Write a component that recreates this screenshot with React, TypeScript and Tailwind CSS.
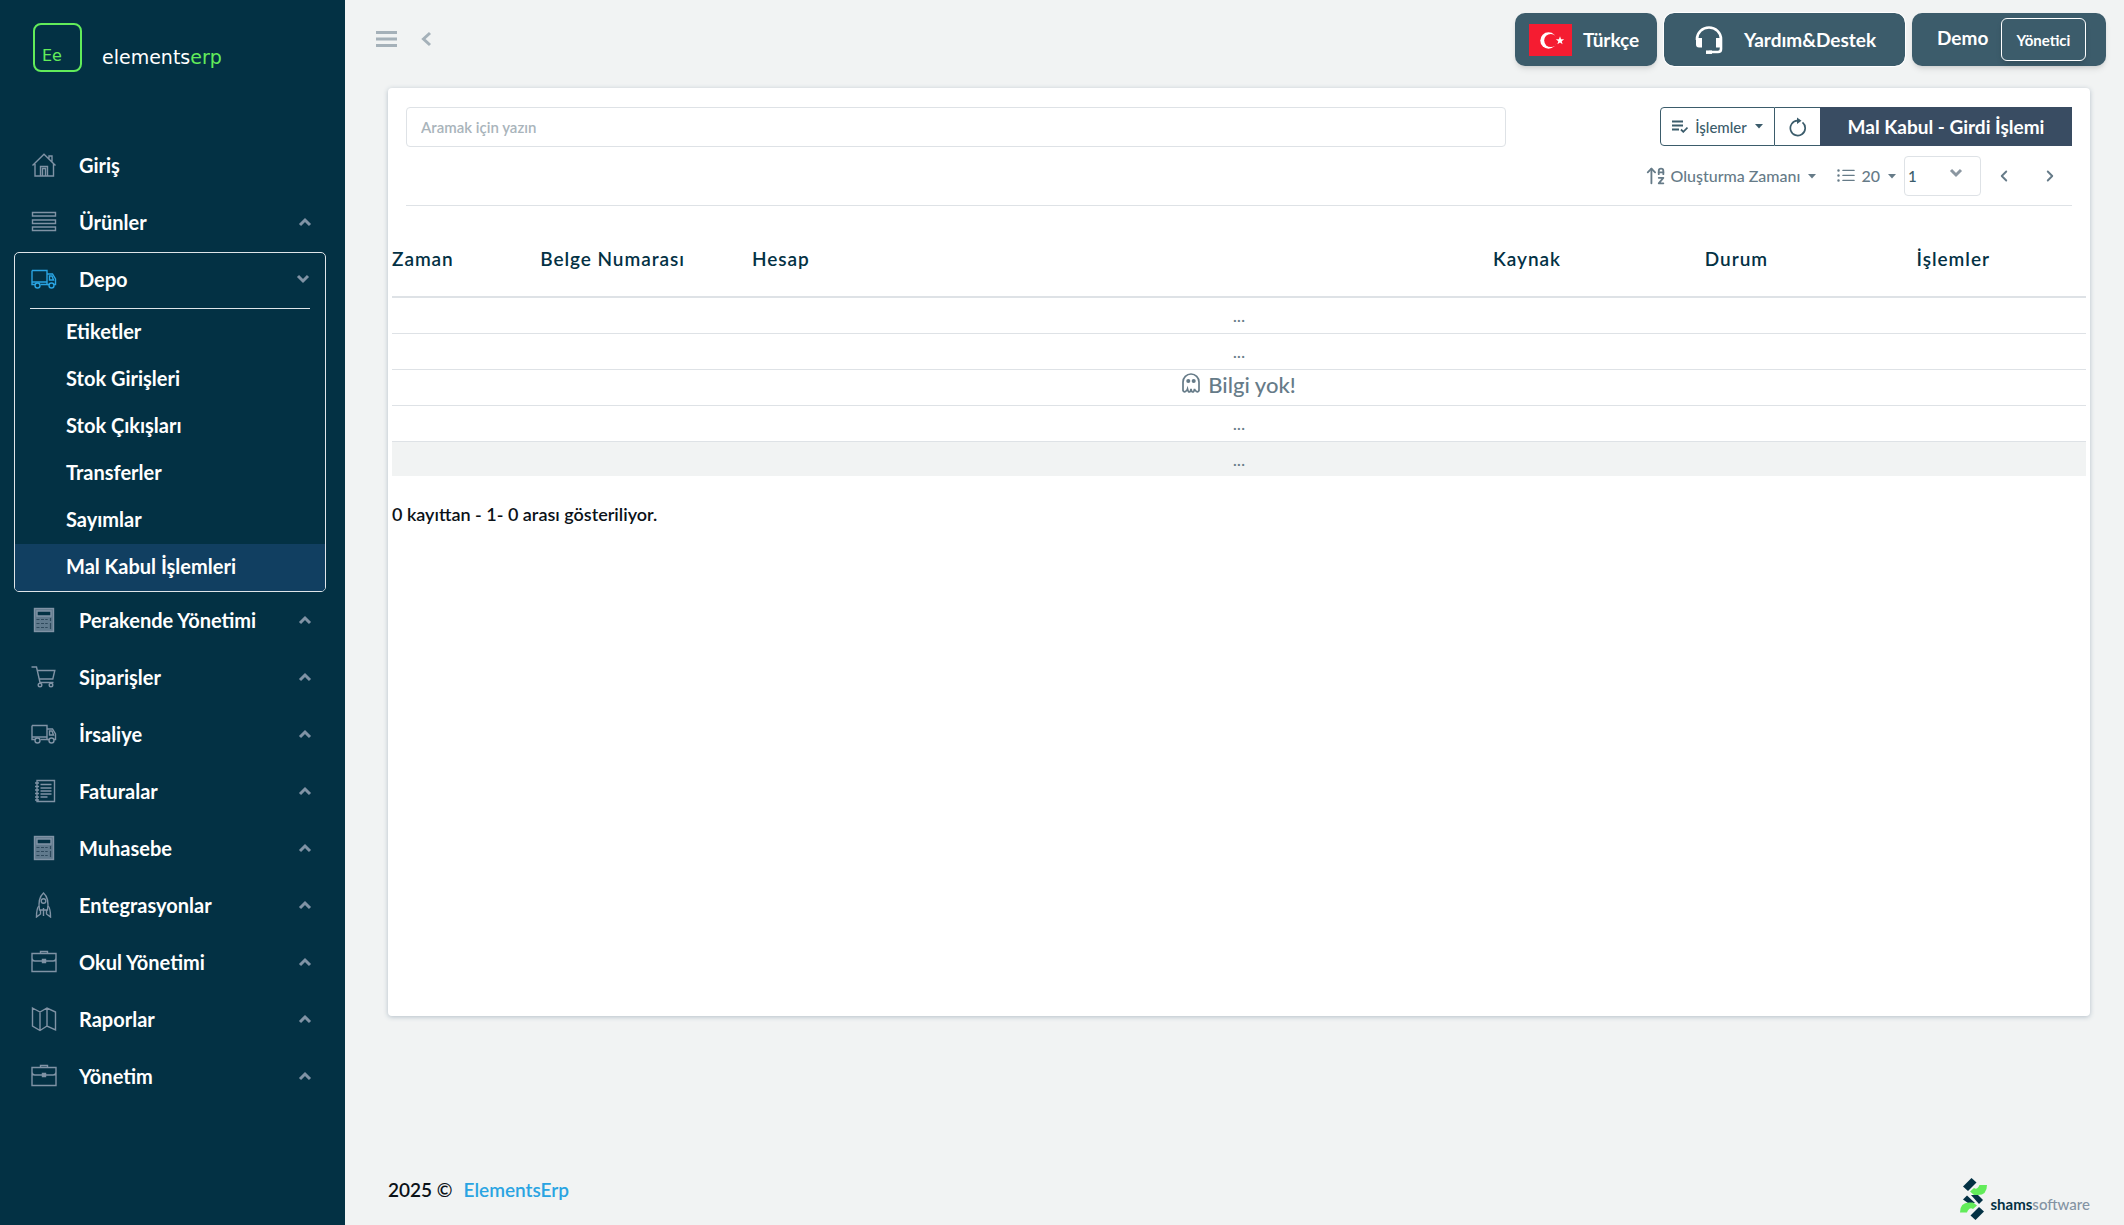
import type { ReactNode } from "react";
import { BsListUl, BsChevronLeft, BsChevronRight } from "react-icons/bs";
import { ArrowUpAZ } from "lucide-react";

function Stroke({ children, className = "" }: { children: ReactNode; className?: string }) {
  return (
    <svg
      viewBox="0 0 26 26"
      fill="none"
      stroke="currentColor"
      strokeWidth="1.4"
      aria-hidden="true"
      className={`size-[26px] shrink-0 ${className}`}
    >
      {children}
    </svg>
  );
}

const HomeIcon = () => (
  <Stroke>
    <path d="M1.5 13.5 13 2.2l11.500 11.300M4 12v12h18.500V12M18 6.500V4h3v5.500" />
    <path d="M9.500 24V14.500h7V24M11.500 24v-7.500h3V24" />
  </Stroke>
);
const ListIcon = () => (
  <Stroke>
    <path d="M1.500 3.500h23v3.500h-23zM1.500 11h23v3.500h-23zM1.500 18h23v3.500h-23z" />
  </Stroke>
);
const TruckIcon = () => (
  <Stroke>
    <path d="M1 4.500h15v14H9.500M4 18.500H1v-14" />
    <path d="M16 8h5.500l3 5v5.500h-1.500M18 18.500h-2" />
    <path d="M18.500 10h2.500l1.500 4h-4zM1 16h15" />
    <circle cx="6.500" cy="19.500" r="2.500" />
    <circle cx="20.500" cy="19.500" r="2.500" />
  </Stroke>
);
const CalculatorIcon = () => (
  <Stroke>
    <rect x="3.500" y="1.500" width="19" height="23" fill="currentColor" fillOpacity="0.75" />
    <path d="M6 4h14v5H6z" className="fill-[#033144]" />
    <path
      d="M5.500 12.500h3M10 12.500h3M14.200 12.500h2.500M5.500 16.500h3M10 16.500h3M14.200 16.500h2.500M5.500 20.500h3M10 20.500h3M14.200 20.500h2.500M19.500 11v3M19.500 16v6"
      className="stroke-[#2f4a5d]"
      strokeWidth="1.2"
    />
  </Stroke>
);
const CartIcon = () => (
  <Stroke>
    <path d="M.5 3h5l3.500 15.500h13.500M6.500 6.500h17.300l-2 8.500H8.200" />
    <circle cx="9" cy="21" r="1.800" />
    <circle cx="20" cy="21" r="1.800" />
  </Stroke>
);
const InvoiceIcon = () => (
  <Stroke>
    <path d="M6 2.500h17.500v21H6zM9.500 6.500h11M9.500 10h11M9.500 13h11M9.500 16h11M9.500 19h7" />
    <path d="M4 5h4M4 8.500h4M4 12h4M4 15.500h4M4 19h4M4 22h4" />
  </Stroke>
);
const RocketIcon = () => (
  <Stroke>
    <path d="M12.500 1c-4 3.500-5.500 8-4 17h8c1.500-9 0-13.500-4-17z" />
    <circle cx="12.500" cy="9" r="2.300" />
    <path d="M8 14c-2 1.500-2.500 3.500-2.500 11l4-3V18M17 14c2 1.500 2.500 3.500 2.500 11l-4-3V18M12.500 16v8" />
  </Stroke>
);
const BriefcaseIcon = () => (
  <Stroke>
    <path d="M1 4.500h24v18H1zM9.500 4.500V2.500h7v2M1 8.500q0 3.500 3 3.500h7M25 8.500q0 3.500-3 3.500h-7" />
    <path d="M11.500 10.500h3v3h-3z" fill="currentColor" />
  </Stroke>
);
const MapIcon = () => (
  <Stroke>
    <path d="M1.500 2 9 6l7-4 8.500 4v18L16 20l-7 4.500L1.500 20zM9 6v18.500M16 2v18" />
  </Stroke>
);

function Chevron({ dir = "up", className = "" }: { dir?: "up" | "down"; className?: string }) {
  return (
    <svg viewBox="0 0 14 10" className={`w-[14px] h-[10px] ${className}`} fill="none" stroke="currentColor" strokeWidth="3" aria-hidden="true">
      <path d={dir === "up" ? "M2 8l5-5 5 5" : "M2 2l5 5 5-5"} />
    </svg>
  );
}

function Caret() {
  return (
    <svg viewBox="0 0 8 5" className="w-2 h-[5px]" fill="currentColor" aria-hidden="true">
      <path d="M0 0h8L4 4.500z" />
    </svg>
  );
}

function NavRow({ icon, label, open, leaf }: { icon: ReactNode; label: string; open?: boolean; leaf?: boolean }) {
  return (
    <a href="#" className={`flex items-center pb-1 pl-[31px] pr-[33px] text-white ${open ? "h-[55px]" : "h-[57px]"}`}>
      <span className={open ? "text-[#2aa4e2]" : "text-[#8093a5]"}>{icon}</span>
      <span className="ml-[22px] grow text-[20px] leading-6 font-bold">{label}</span>
      {!leaf && <Chevron dir={open ? "down" : "up"} className="text-[#8093a5]" />}
    </a>
  );
}

const subItems = ["Etiketler", "Stok Girişleri", "Stok Çıkışları", "Transferler", "Sayımlar", "Mal Kabul İşlemleri"];

const lowerItems = [
  { label: "Perakende Yönetimi", icon: <CalculatorIcon /> },
  { label: "Siparişler", icon: <CartIcon /> },
  { label: "İrsaliye", icon: <TruckIcon /> },
  { label: "Faturalar", icon: <InvoiceIcon /> },
  { label: "Muhasebe", icon: <CalculatorIcon /> },
  { label: "Entegrasyonlar", icon: <RocketIcon /> },
  { label: "Okul Yönetimi", icon: <BriefcaseIcon /> },
  { label: "Raporlar", icon: <MapIcon /> },
  { label: "Yönetim", icon: <BriefcaseIcon /> },
];

function Sidebar() {
  return (
    <aside className="w-[345px] shrink-0 bg-[#033144]">
      <a href="#" className="flex h-[138px] items-start pl-[33px] pt-[23px] font-['DejaVu_Sans']">
        <span className="flex size-[49px] items-end rounded-lg border-2 border-[#62ec5a] pb-1 pl-[7px] text-[16px] leading-5 text-[#62ec5a]">
          Ee
        </span>
        <span className="ml-5 mt-[22px] text-[19px] leading-6 text-white">
          elements<span className="text-[#62ec5a]">erp</span>
        </span>
      </a>
      <nav>
        <NavRow icon={<HomeIcon />} label="Giriş" leaf />
        <NavRow icon={<ListIcon />} label="Ürünler" />
        <div className="mb-px ml-[14px] mr-[19px] overflow-hidden rounded-[5px] border border-[#dfe5e9]">
          <div className="mx-[15px] border-b border-[#dfe5e9]">
            <div className="-ml-[30px] -mr-[33px]">
              <NavRow icon={<TruckIcon />} label="Depo" open />
            </div>
          </div>
          <ul>
            {subItems.map((s) => (
              <li key={s}>
                <a
                  href="#"
                  className={`flex h-[47px] items-center pb-1 pl-[51px] text-[20px] leading-6 font-bold text-white ${
                    s === "Mal Kabul İşlemleri" ? "bg-[#113f61]" : ""
                  }`}
                >
                  {s}
                </a>
              </li>
            ))}
          </ul>
        </div>
        {lowerItems.map((i) => (
          <NavRow key={i.label} icon={i.icon} label={i.label} />
        ))}
      </nav>
    </aside>
  );
}

function TopBar() {
  return (
    <header className="flex h-[88px] items-start justify-between pl-[31px] pr-[18px] pt-[13px]">
      <div className="flex h-[52px] items-center gap-[23px] text-[#a5b1b9]">
        <button type="button" aria-label="Menü">
          <svg viewBox="0 0 21 16" className="h-4 w-[21px]" fill="currentColor">
            <path d="M0 0h21v3H0zM0 6.500h21v3H0zM0 13h21v3H0z" />
          </svg>
        </button>
        <button type="button" aria-label="Geri">
          <svg viewBox="0 0 12 16" className="h-4 w-3" fill="none" stroke="currentColor" strokeWidth="3">
            <path d="M10 2 3.500 8l6.500 6" />
          </svg>
        </button>
      </div>
      <div className="flex gap-[7px] text-[19px] leading-6 font-bold text-white">
        <button type="button" className="flex h-[53px] w-[142px] items-center rounded-[10px] bg-[#3c5c6b] pl-[14px] shadow-md">
          <svg viewBox="0 0 43 32" className="h-8 w-[43px]" aria-hidden="true">
            <rect width="43" height="32" fill="#f51c31" />
            <circle cx="19.500" cy="16.500" r="8.200" fill="#fff" />
            <circle cx="21.800" cy="16.500" r="6.600" fill="#f51c31" />
            <path d="M31 12.200l1.100 3 3.100.100-2.500 1.900.9 3-2.600-1.800-2.600 1.800.9-3-2.500-1.900 3.100-.1z" fill="#fff" />
          </svg>
          <span className="ml-[11px]">Türkçe</span>
        </button>
        <button
          type="button"
          className="flex h-[53px] w-[241px] items-center rounded-[10px] bg-[#3c5c6b] pl-[31px] outline outline-white"
        >
          <svg viewBox="0 0 28 28" className="size-7" fill="none" stroke="currentColor" strokeWidth="2.600" aria-hidden="true">
            <path d="M2 14v-1a12 11.500 0 0 1 24 0v10q0 3-3 3h-9" />
            <path d="M1 12h6v9.500H4Q1 21.500 1 18.500zM21 12h6v6.500q0 3-3 3h-3z" fill="currentColor" stroke="none" />
            <path d="M11 26.200h6" strokeWidth="3.500" />
          </svg>
          <span className="ml-[21px]">Yardım&amp;Destek</span>
        </button>
        <div className="flex h-[53px] w-[194px] items-start justify-between rounded-[10px] bg-[#3c5c6b] pl-[25px] pr-5 pt-[5px] shadow-md">
          <span className="mt-2">Demo</span>
          <button type="button" className="h-[43px] w-[85px] rounded-md border border-white text-[15px] leading-5 shadow-md">
            Yönetici
          </button>
        </div>
      </div>
    </header>
  );
}

function Toolbar() {
  return (
    <div className="mx-[18px] flex h-[118px] items-start justify-between border-b border-[#dee2e6] pt-[19px]">
      <input
        type="text"
        aria-label="Arama"
        placeholder="Aramak için yazın"
        className="h-10 w-[66%] rounded border border-[#dee2e6] px-[14px] text-[15px] font-semibold outline-none placeholder:text-[#a9b4bb]"
      />
      <div className="flex flex-col items-end text-[#667b88]">
        <div className="flex h-[39px]">
          <button
            type="button"
            className="flex w-[115px] items-center justify-center rounded-l border border-[#3b5c6b] text-[15px] leading-5 font-medium text-[#3b5c6b]"
          >
            <svg viewBox="0 0 16 13" className="mr-[7px] h-[13px] w-4" fill="none" stroke="currentColor" strokeWidth="1.800" aria-hidden="true">
              <path d="M0 1.500h11M0 5.500h11M0 9.500h7M9 9.500l2.300 2.300L15.500 7.600" />
            </svg>
            İşlemler
            <span className="ml-2">
              <Caret />
            </span>
          </button>
          <button
            type="button"
            aria-label="Yenile"
            className="flex w-[45px] items-center justify-center border-y border-[#3b5c6b] text-[#3b5c6b]"
          >
            <svg viewBox="0 0 18 20" className="h-5 w-[18px]" fill="none" stroke="currentColor" strokeWidth="1.700" aria-hidden="true">
              <path d="M13.500 5.400a7.400 7.400 0 1 1-5-1.700h2" />
              <path d="M8 .5 12.500 3.700 8 7z" fill="currentColor" stroke="none" />
            </svg>
          </button>
          <button type="button" className="w-[252px] bg-[#394c62] text-[19px] leading-6 font-bold text-white">
            Mal Kabul - Girdi İşlemi
          </button>
        </div>
        <div className="mt-[10px] flex h-10 items-center pr-4 text-base leading-5 font-medium">
          <button type="button" className="flex items-center">
            <ArrowUpAZ className="mr-1 size-[22px]" strokeWidth={2} />
            Oluşturma Zamanı
            <span className="ml-2">
              <Caret />
            </span>
          </button>
          <button type="button" className="ml-5 flex items-center">
            <BsListUl className="mr-[5px] size-5" />
            20
            <span className="ml-2">
              <Caret />
            </span>
          </button>
          <div className="relative ml-2">
            <select
              aria-label="Sayfa"
              defaultValue="1"
              className="block h-10 w-[77px] appearance-none rounded border border-[#dee2e6] bg-white pl-[3px] text-[15px] text-[#3b5c6b]"
            >
              <option>1</option>
            </select>
            <Chevron dir="down" className="pointer-events-none absolute right-[18px] top-3 text-[#8b97a1]" />
          </div>
          <button type="button" aria-label="Önceki" className="ml-[17px]">
            <BsChevronLeft className="size-3" strokeWidth="1.500" />
          </button>
          <button type="button" aria-label="Sonraki" className="ml-[34px]">
            <BsChevronRight className="size-3" strokeWidth="1.500" />
          </button>
        </div>
      </div>
    </div>
  );
}

const columns = [
  { label: "Zaman", width: "w-[8.75%]" },
  { label: "Belge Numarası", width: "w-[12.5%]" },
  { label: "Hesap", width: "w-[43.75%]" },
  { label: "Kaynak", width: "w-[12.5%]" },
  { label: "Durum", width: "w-[12.5%]" },
  { label: "İşlemler", width: "w-[10%]" },
];

function EmptyNotice() {
  return (
    <span className="flex items-center justify-center gap-2 pb-1 text-[22px] leading-7 font-medium">
      <svg viewBox="0 0 18 20" className="-mt-1 h-5 w-[18px]" fill="none" stroke="currentColor" strokeWidth="1.700" aria-hidden="true">
        <path d="M1 17.500V9a8 8 0 0 1 16 0v8.500q-1 2-2.500 1t-2-2.500q-.5 3-1.700 3T9 16q-.500 3-1.700 3t-1.800-3q-.5 1.500-2 2.500T1 17.500z" />
        <circle cx="6.300" cy="8" r="1.200" fill="currentColor" />
        <circle cx="11.700" cy="8" r="1.200" fill="currentColor" />
      </svg>
      Bilgi yok!
    </span>
  );
}

function Records() {
  return (
    <div className="px-1">
      <table className="w-full table-fixed">
        <thead>
          <tr className="h-[91px] border-b-2 border-[#dee2e6]">
            {columns.map((c) => (
              <th key={c.label} className={`pt-4 text-left text-[19px] leading-6 font-semibold tracking-wider text-[#033144] ${c.width}`}>
                {c.label}
              </th>
            ))}
          </tr>
        </thead>
        <tbody className="text-center text-[18px] leading-5 text-[#667b88]">
          {[0, 1, 2, 3, 4].map((r) => (
            <tr key={r} className="h-9 border-b border-[#dee2e6] last:h-[35px] last:border-0 last:bg-[#f1f3f3]">
              <td colSpan={6}>{r === 2 ? <EmptyNotice /> : "..."}</td>
            </tr>
          ))}
        </tbody>
      </table>
      <p className="mt-[26px] text-[18px] leading-6 font-semibold text-[#0b1218]">0 kayıttan - 1- 0 arası gösteriliyor.</p>
    </div>
  );
}

function Footer() {
  return (
    <footer className="flex h-[209px] items-end justify-between pl-[43px] pr-[34px] pb-[5px] text-[19px] leading-6 font-semibold text-[#0b1218]">
      <p className="mb-[18px]">
        2025 ©
        <a href="#" className="ml-[11px] text-[#2aa4e2]">
          ElementsErp
        </a>
      </p>
      <a href="#" className="flex items-end text-[15px] leading-5 text-[#8493a3]">
        <svg viewBox="0 0 27 42" className="mr-1 h-[42px] w-[27px]" aria-hidden="true">
          <g fill="#033144">
            <path d="M3 8.500 11.500 0l5 4.500L8 13z" />
            <path d="M3 21.500 7 17.500l8 7.500H8z" />
            <path d="M11 17h7l5 5-4 4z" />
            <path d="M10.500 37.500 19 29l5 4.500-8.500 8.500z" />
          </g>
          <path d="M10 13.500 14 10q2 1.500 3.500 0t2-3H27q0 10.500-10 10h-3z" fill="#62ec5a" />
          <path d="M17 27.500 13 31q-2-1.500-3.800 0T7 34.500H0Q0 24 10 24.500h3z" fill="#62ec5a" />
        </svg>
        <span className="mb-[6px] font-medium">
          <strong className="font-bold text-[#033144]">shams</strong>software
        </span>
      </a>
    </footer>
  );
}

export default function App() {
  return (
    <div className="flex min-h-screen bg-[#f1f3f3] font-[Lato,sans-serif]">
      <Sidebar />
      <div className="flex min-w-0 grow flex-col">
        <TopBar />
        <main className="ml-[43px] mr-[34px] grow rounded bg-white shadow-[0_1px_5px_#b4bfc8]">
          <Toolbar />
          <Records />
        </main>
        <Footer />
      </div>
    </div>
  );
}
